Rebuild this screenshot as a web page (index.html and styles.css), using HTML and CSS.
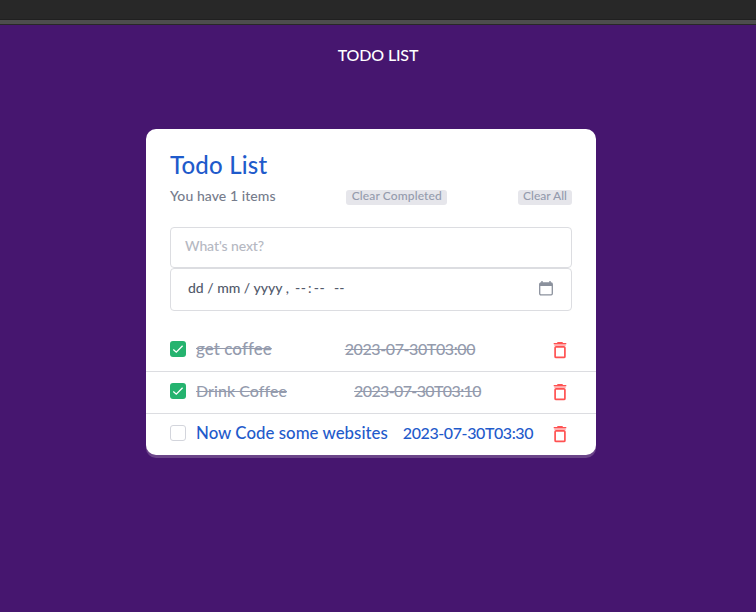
FILE: index.html
```html
<!DOCTYPE html>
<html lang="en">
<head>
<meta charset="utf-8">
<title>Todo List</title>
<link rel="stylesheet" href="styles.css">
</head>
<body>
<svg class="defs" aria-hidden="true">
  <symbol id="trash" viewBox="0 0 24 24">
    <path d="M6.3 7.1h11.4" stroke="#ffaaaa" stroke-width="1.6"/>
    <path d="M5.7 5.7h12.6M9.3 4.6h5.4" stroke="#ff5252" stroke-width="1.3"/>
    <rect x="7.1" y="8.8" width="9.8" height="10.6" rx="1" fill="none" stroke="#ff5252" stroke-width="1.7"/>
  </symbol>
  <symbol id="check" viewBox="0 0 16 16">
    <path d="M3.3 8.4l3 2.8 6.3-6.4" fill="none" stroke="#fff" stroke-width="1.3"/>
  </symbol>
</svg>
<div class="chrome"></div>
<div class="chrome-edge"></div>
<header class="page-title"><span>TODO LIST</span></header>
<main class="card">
  <div class="card-head">
    <h1>Todo List</h1>
    <div class="summary">
      <span class="count">You have 1 items</span>
      <button class="pill completed">Clear Completed</button>
      <button class="pill all">Clear All</button>
    </div>
    <div class="field next"><span>What's next?</span></div>
    <div class="field date">
      <span class="day">dd / mm / yyyy ,</span><span class="time">--&#8202;:&#8202;--</span><span class="ampm">--</span>
      <svg class="calendar" viewBox="0 0 14 15">
        <path d="M3 0v3M11 0v3" stroke="#8b919d" stroke-width="1.4"/>
        <rect x=".7" y="2" width="12.6" height="11.8" rx="1.2" fill="none" stroke="#8b919d" stroke-width="1.3"/>
        <path d="M1 2h12v3H1z" fill="#8b919d"/>
      </svg>
    </div>
  </div>
  <ul class="items">
    <li class="done"><span class="box"><svg><use href="#check"/></svg></span><span class="label l1">get coffee</span><time>2023-07-30T03:00</time><svg class="trash"><use href="#trash"/></svg></li>
    <li class="done"><span class="box"><svg><use href="#check"/></svg></span><span class="label l2">Drink Coffee</span><time class="t2">2023-07-30T03:10</time><svg class="trash"><use href="#trash"/></svg></li>
    <li><span class="box"></span><span class="label l3">Now Code some websites</span><time>2023-07-30T03:30</time><svg class="trash"><use href="#trash"/></svg></li>
  </ul>
</main>
</body>
</html>
```
FILE: styles.css
```css
* { box-sizing: border-box; }
body { margin: 0; height: 612px; overflow: hidden; background: #46166f; font-family: Lato, "Liberation Sans", sans-serif; font-weight: 500; }
.defs { display: none; }
.chrome { height: 20px; background: #282828; border-bottom: 1px solid #202020; }
.chrome-edge { height: 5px; background: #4d4d4d; border-bottom: 1px solid #282828; }
.page-title { height: 104px; padding-top: 20px; text-align: center; color: #fff; font-size: 16px; line-height: 20px; letter-spacing: -.15px; }
.card { width: 450px; height: 326px; margin-left: 146px; background: #fff; border-radius: 10px; box-shadow: 0 3px 0 #6b4589; }
.card-head { height: 200px; padding: 21px 24px 0; }
h1 { margin: 0; color: #1f5bcb; font-size: 24px; line-height: 30px; font-weight: 500; letter-spacing: .2px; }
.summary { display: flex; justify-content: space-between; margin-top: 5px; height: 22px; color: #767c8c; font-size: 14px; line-height: 22px; white-space: nowrap; letter-spacing: .07px; }
.pill { width: 101px; height: 15px; margin: 5px 0 0; padding: 0; border: 0; border-radius: 3px; background: #e6e6eb; color: #949bad; font: 500 12px/12px Lato, sans-serif; letter-spacing: .12px; display: flex; justify-content: center; align-items: flex-start; }
.pill.all { width: 54px; letter-spacing: 0; }
.field { border: 1px solid #dcdde1; border-radius: 4px; display: flex; font-size: 14px; }
.next { height: 41px; margin-top: 20px; padding-left: 14px; line-height: 35px; color: #b5b8c2; letter-spacing: -.1px; }
.date { height: 43px; padding: 0 18px 0 17px; line-height: 37px; color: #525a6b; }
.day { width: 107px; }
.time { width: 39px; letter-spacing: .6px; }
.calendar { width: 14px; height: 15px; margin: 12px 0 0 auto; }
.items { list-style: none; margin: 0; padding: 0; }
li { display: flex; align-items: center; height: 42px; padding: 0 24px 1px; border-bottom: 1px solid #dcdde1; color: #1f5bcb; font-size: 16px; line-height: 20px; white-space: nowrap; }
li:first-child { height: 43px; padding-bottom: 0; }
li:last-child { height: 41px; border-bottom: 0; }
.box { width: 16px; height: 16px; margin: 0 10px 2px 0; border: 1px solid #d3d5dc; border-radius: 3px; flex: none; display: flex; }
.label, time { margin: 0 auto 2px 0; }
.l1 { font-size: 17px; letter-spacing: .05px; }
.l2 { letter-spacing: .05px; }
.l3 { font-size: 16.8px; letter-spacing: .05px; }
time { letter-spacing: -.4px; }
.t2 { letter-spacing: -.62px; }
.done { color: #949bad; }
.done .label, .done time { text-decoration: line-through; }
.done .box { background: #25b36f; border: 0; }
.box svg { width: 16px; height: 16px; }
.trash { width: 24px; height: 24px; flex: none; }
```
